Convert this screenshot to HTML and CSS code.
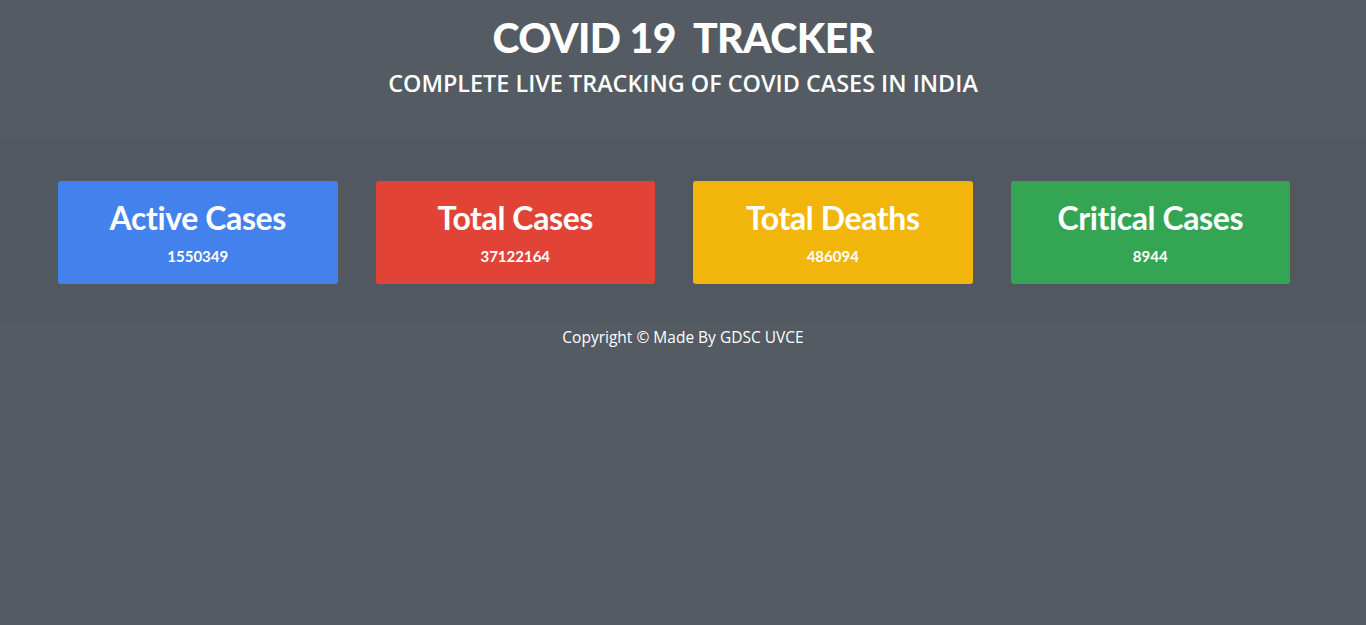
FILE: index.html
```html
<!DOCTYPE html>
<html>
<head>
<meta charset="utf-8">
<link rel="stylesheet" href="styles.css">
</head>
<body>
<header class="header">
  <h1 class="title">COVID 19&nbsp; TRACKER</h1>
  <h2 class="subtitle">COMPLETE LIVE TRACKING OF COVID CASES IN INDIA</h2>
</header>
<section class="stats">
  <div class="card blue"><h3 class="card-title">Active Cases</h3><p class="card-num">1550349</p></div>
  <div class="card red"><h3 class="card-title">Total Cases</h3><p class="card-num">37122164</p></div>
  <div class="card yellow"><h3 class="card-title">Total Deaths</h3><p class="card-num">486094</p></div>
  <div class="card green"><h3 class="card-title">Critical Cases</h3><p class="card-num">8944</p></div>
</section>
<footer class="footer">Copyright © Made By GDSC UVCE</footer>
</body>
</html>
```
FILE: styles.css
```css
html, body { margin: 0; padding: 0; }
body {
  background: #555b62;
  color: #fff;
  font-family: "Open Sans", sans-serif;
  min-height: 625px;
}
.header {
  height: 141px;
  display: flex;
  flex-direction: column;
  align-items: center;
  box-sizing: border-box;
  padding-top: 14px;
}
.title {
  margin: 0;
  font-family: Lato, sans-serif;
  font-weight: 900;
  font-size: 41px;
  line-height: 48px;
  letter-spacing: -0.6px;
}
.subtitle {
  margin: 6px 0 0;
  font-family: "Open Sans", sans-serif;
  font-weight: 600;
  font-size: 23.4px;
  line-height: 30px;
}
.stats {
  background: #52585f;
  display: flex;
  gap: 38px;
  padding: 40px 76px 40px 58px;
}
.card {
  width: 280px;
  height: 103px;
  border-radius: 3px;
  display: flex;
  flex-direction: column;
  align-items: center;
  box-sizing: border-box;
  padding-top: 18px;
}
.blue { background: #4381ec; }
.red { background: #e14437; }
.yellow { background: #f2b50c; }
.green { background: #34a553; }
.card-title {
  margin: 0;
  font-family: Lato, sans-serif;
  font-weight: 700;
  font-size: 32px;
  line-height: 38px;
  letter-spacing: -0.4px;
}
.card-num {
  margin: 10px 0 0;
  font-family: Lato, sans-serif;
  font-weight: 700;
  font-size: 15px;
  line-height: 18px;
}
.footer {
  text-align: center;
  font-size: 15.5px;
  line-height: 20px;
  padding-top: 3px;
}
```
